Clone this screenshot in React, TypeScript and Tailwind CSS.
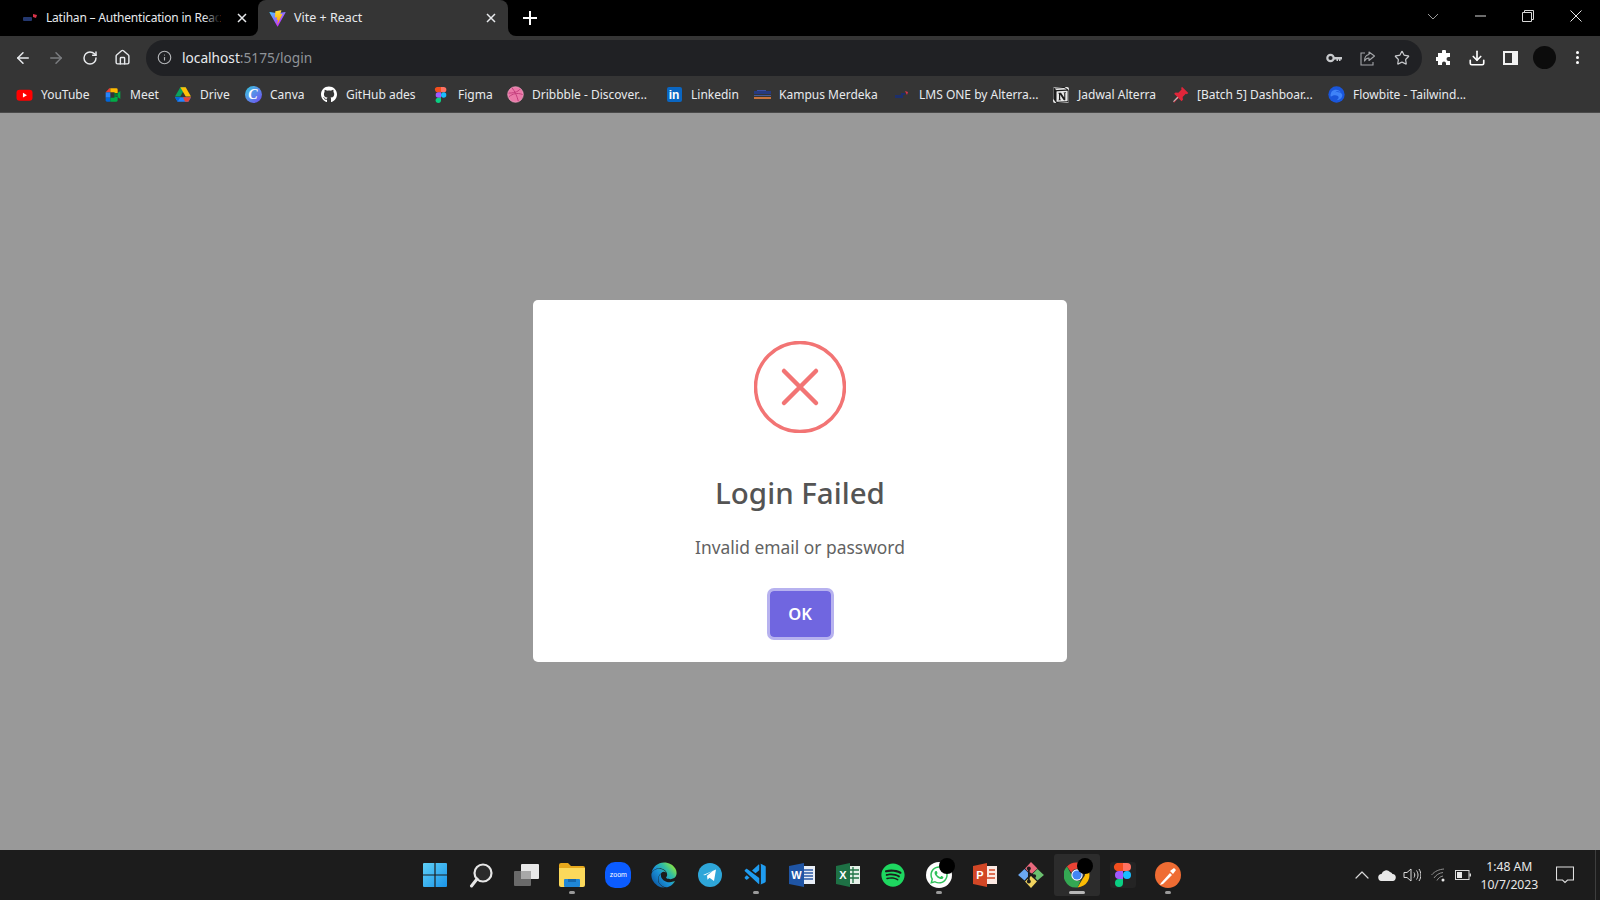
import React from "react";
import { ArrowLeft, ArrowRight, RotateCw, Home, Info, Star, Download, ChevronUp } from "lucide-react";
import { FaGithub, FaSpotify, FaWhatsapp, FaEdge } from "react-icons/fa";
import { SiNotion } from "react-icons/si";
import { VscVscodeInsiders } from "react-icons/vsc";

const FONT = "font-['Noto_Sans','Open_Sans',sans-serif]";

const ViteIcon = () => (
  <svg width="17" height="17" viewBox="0 0 410 404">
    <defs>
      <linearGradient id="va" x1="6" y1="33" x2="235" y2="344" gradientUnits="userSpaceOnUse">
        <stop stopColor="#41D1FF" />
        <stop offset="1" stopColor="#BD34FE" />
      </linearGradient>
      <linearGradient id="vb" x1="194" y1="8" x2="236" y2="292" gradientUnits="userSpaceOnUse">
        <stop stopColor="#FFEA83" />
        <stop offset="0.08" stopColor="#FFDD35" />
        <stop offset="1" stopColor="#FFA800" />
      </linearGradient>
    </defs>
    <path d="M399.6 59.5 215.9 388.2c-3.8 6.8-13.5 6.8-17.4.1L11.2 59.5C7 52.1 13.3 43.2 21.6 44.7l183.9 32.9c1.2.2 2.4.2 3.6 0l180-32.8c8.3-1.5 14.6 7.2 10.5 14.7Z" fill="url(#va)" />
    <path d="M292.9 1.6 156.9 28.2c-2.2.4-3.9 2.3-4 4.6l-8.4 141.2c-.2 3.3 2.9 5.9 6.1 5.2l37.9-8.8c3.5-.8 6.7 2.3 6 5.9l-11.3 55.1c-.8 3.7 2.7 6.9 6.3 5.8l23.4-7.1c3.6-1.1 7.1 2.1 6.3 5.8l-17.9 86.6c-1.1 5.4 6.1 8.4 9.1 3.7l2-3.1 110.9-221.3c1.9-3.7-1.3-7.9-5.4-7.1l-39 7.5c-3.7.7-6.8-2.7-5.8-6.3l25.5-88.2c1-3.7-2.2-7.1-5.9-6.4Z" fill="url(#vb)" />
  </svg>
);

const YouTube = () => (
  <svg width="17" height="16" viewBox="0 0 24 24" className="shrink-0">
    <rect x="0" y="4" width="24" height="16.5" rx="4.5" fill="#f00" />
    <path d="M9.7 8.7v7l6-3.5z" fill="#fff" />
  </svg>
);
const Meet = () => (
  <svg width="16" height="16" viewBox="0 0 24 24">
    <path d="M1 8h7V2H6.5L1 8Z" fill="#ea4335" />
    <path d="M1 8h7v8H1z" fill="#2684fc" />
    <path d="M1 16h7v6H3a2 2 0 0 1-2-2v-4Z" fill="#0066da" />
    <path d="M8 2h9a2 2 0 0 1 2 2v5h-5V8H8V2Z" fill="#ffba00" />
    <path d="M8 16h6v-1h5v5a2 2 0 0 1-2 2H8v-6Z" fill="#00ac47" />
    <path d="M14 8v8l5-3v-2z" fill="#00832d" />
    <path d="m19 9 4-3v12l-4-3z" fill="#00ac47" />
  </svg>
);
const Drive = () => (
  <svg width="16" height="15" viewBox="0 0 24 22">
    <path d="m8 0 8 0-8 14H0z" fill="#0ba25e" />
    <path d="M8 0h8l8 14h-8z" fill="#ffc107" />
    <path d="M0 15h24l-4 7H4z" fill="#2684fc" />
    <path d="M0 15h8l-4 7z" fill="#0066da" />
    <path d="m24 15-4 7h-5l-3-7z" fill="#ea4335" />
  </svg>
);
const Canva = () => (
  <span className="flex h-[17px] w-[17px] shrink-0 items-center justify-center rounded-full bg-gradient-to-br from-[#1fc8db] to-[#6a3df0] font-['Liberation_Serif',serif] text-[14px] font-bold italic leading-none text-white">
    C
  </span>
);
const Figma = ({ s = 16 }: { s?: number }) => (
  <svg width={s} height={s} viewBox="0 0 24 24">
    <path d="M6 0h6v8H8a4 4 0 0 1-2-8Z" fill="#f24e1e" />
    <path d="M12 0h4a4 4 0 0 1 0 8h-4z" fill="#ff7262" />
    <path d="M12 8H8a4 4 0 0 0 0 8h4z" fill="#a259ff" />
    <circle cx="16" cy="12" r="4" fill="#1abcfe" />
    <path d="M12 16H8a4 4 0 1 0 4 4z" fill="#0acf83" />
  </svg>
);
const Dribbble = () => (
  <svg width="17" height="17" viewBox="0 0 24 24" fill="none" className="shrink-0">
    <circle cx="12" cy="12" r="11" fill="#ea79a8" stroke="#f3a6c6" />
    <path d="M7 2.500c4 5 7 11 9 19M2 10c6 0 13-1 17-6M3 15c5-4 11-6 19-3" stroke="#c33f7c" strokeWidth="1.400" />
  </svg>
);
const Linkedin = () => (
  <span className="flex h-[15px] w-[15px] items-center justify-center rounded-[2px] bg-[#0a66c2] font-['Liberation_Sans',sans-serif] text-[12px] font-bold leading-none text-white">
    in
  </span>
);
const Kampus = () => (
  <svg width="17" height="10" viewBox="0 0 17 10" className="shrink-0">
    <rect y="1" width="17" height="3" fill="#273a80" />
    <rect x="3" y="0" width="9" height="1" fill="#3b4ea0" />
    <rect y="5" width="17" height="1" fill="#455a9c" />
    <rect y="7" width="17" height="2" fill="#c9733c" />
  </svg>
);
const Lms = () => (
  <svg width="16" height="10" viewBox="0 0 16 10">
    <rect x="1" y="5" width="8" height="3" fill="#1d2f6b" />
    <rect x="7" y="3" width="4" height="2" fill="#1d2f6b" />
    <path d="m11 1 3 1-1 3z" fill="#d9344a" />
  </svg>
);
const Notion = () => (
  <span className="flex h-4 w-4 items-center justify-center rounded-[2px] bg-[#e8e8e8]">
    <SiNotion size={16} color="#1c1c1c" />
  </span>
);
const Pin = () => (
  <svg width="17" height="17" viewBox="0 0 24 24" className="shrink-0">
    <path d="m14 1 9 9-2 1.500-1.500-.5-4.500 4.500.5 4-2 2-4.500-4.500-6 6.500-1-1 6-6.500L3 11l2-2 4 .5L13.500 5 13 3z" fill="#e0263a" />
    <path d="m7.500 15 1.500 1.500-6.500 6-1-1z" fill="#b9b9b9" />
  </svg>
);
const Flowbite = () => (
  <svg width="17" height="17" viewBox="0 0 24 24" className="shrink-0">
    <circle cx="12" cy="12" r="11.500" fill="#1a56db" />
    <path d="M5 8c4-4 11-3 13 1-3-2-6-2-8 0 4-1 8 0 10 3 1 4-3 8-8 8 3-2 4-4 2-6-3-2-8-1-10 1-1-2 0-5 1-7Z" fill="#3f83f8" />
  </svg>
);

const bookmarks: { icon: React.ReactNode; label: string; w: string }[] = [
  { icon: <YouTube />, label: "YouTube", w: "w-[89px]" },
  { icon: <Meet />, label: "Meet", w: "w-[70px]" },
  { icon: <Drive />, label: "Drive", w: "w-[70px]" },
  { icon: <Canva />, label: "Canva", w: "w-[76px]" },
  { icon: <FaGithub size={17} color="#fff" />, label: "GitHub ades", w: "w-[112px]" },
  { icon: <Figma />, label: "Figma", w: "w-[74px]" },
  { icon: <Dribbble />, label: "Dribbble - Discover...", w: "w-[159px]" },
  { icon: <Linkedin />, label: "Linkedin", w: "w-[88px]" },
  { icon: <Kampus />, label: "Kampus Merdeka", w: "w-[140px]" },
  { icon: <Lms />, label: "LMS ONE by Alterra...", w: "w-[159px]" },
  { icon: <Notion />, label: "Jadwal Alterra", w: "w-[119px]" },
  { icon: <Pin />, label: "[Batch 5] Dashboar...", w: "w-[156px]" },
  { icon: <Flowbite />, label: "Flowbite - Tailwind...", w: "w-[150px]" },
];

const Windows = () => (
  <svg width="26" height="26" viewBox="0 0 26 26">
    <defs>
      <linearGradient id="win" x1="0" y1="0" x2="1" y2="1">
        <stop stopColor="#5fd0f7" />
        <stop offset="1" stopColor="#1a94e8" />
      </linearGradient>
    </defs>
    <path d="M1 2a1 1 0 0 1 1-1h10.400v11.400H1zM13.600 1H24a1 1 0 0 1 1 1v10.400H13.600zM1 13.600h11.400V25H2a1 1 0 0 1-1-1zM13.600 13.600H25V24a1 1 0 0 1-1 1H13.600z" fill="url(#win)" />
  </svg>
);
const Search = () => (
  <svg width="26" height="26" viewBox="0 0 26 26" fill="none">
    <circle cx="15" cy="11" r="8.500" stroke="#e6e6e6" strokeWidth="2.200" fill="#2a2a2a" />
    <path d="M9 17 3.500 24" stroke="#e6e6e6" strokeWidth="3" strokeLinecap="round" />
  </svg>
);
const TaskView = () => (
  <svg width="26" height="24" viewBox="0 0 26 24">
    <rect x="0" y="8" width="17" height="15" rx="1" fill="#6a6a6a" />
    <rect x="7" y="1" width="18" height="15" rx="1" fill="#e8e8e8" />
    <rect x="7" y="8" width="10" height="8" fill="#a8a8a8" />
  </svg>
);
const Folder = () => (
  <svg width="26" height="24" viewBox="0 0 26 24">
    <path d="M0 2a2 2 0 0 1 2-2h7l3 3h12a2 2 0 0 1 2 2v4H0z" fill="#e8a91c" />
    <path d="M0 5h26v17a2 2 0 0 1-2 2H2a2 2 0 0 1-2-2z" fill="#fbd95b" />
    <rect x="5" y="16" width="16" height="8" rx="1" fill="#1f86d6" />
    <rect x="9" y="16" width="8" height="3" fill="#1467ae" />
  </svg>
);
const Zoom = () => (
  <span className="flex h-[26px] w-[26px] items-center justify-center rounded-[10px] bg-[#0b5cff] font-['Liberation_Sans',sans-serif] text-[7px] lowercase text-white">
    zoom
  </span>
);
const Edge = () => (
  <>
    <svg width="0" height="0" className="absolute">
      <defs>
        <linearGradient id="edgeg" x1="0.1" y1="0.9" x2="0.9" y2="0.2">
          <stop offset="0" stopColor="#0c59a4" />
          <stop offset="0.45" stopColor="#1b93d8" />
          <stop offset="0.75" stopColor="#33bfa0" />
          <stop offset="1" stopColor="#7fe04f" />
        </linearGradient>
      </defs>
    </svg>
    <FaEdge size={26} fill="url(#edgeg)" />
  </>
);
const Telegram = () => (
  <svg width="24" height="24" viewBox="0 0 24 24">
    <circle cx="12" cy="12" r="12" fill="#2ea6d9" />
    <path d="M5 12 18 6.500 16 18l-4.500-3.300-2 2-.5-4 6-5-8 4.500z" fill="#fff" />
  </svg>
);
const Word = () => (
  <svg width="26" height="24" viewBox="0 0 26 24">
    <rect x="10" y="3" width="16" height="18" fill="#e8eef7" />
    <path d="M13 7h11M13 10h11M13 13h11M13 16h11" stroke="#2b5aa6" strokeWidth="1.500" />
    <path d="M0 3 15 0v24L0 21z" fill="#1f55a5" />
    <text x="7.500" y="16" fontSize="11" fontWeight="700" fill="#fff" textAnchor="middle" fontFamily="Liberation Sans, sans-serif">W</text>
  </svg>
);
const Excel = () => (
  <svg width="24" height="24" viewBox="0 0 24 24">
    <rect x="10" y="3" width="14" height="18" fill="#e5f0e8" />
    <path d="M12 7h11M12 11h11M12 15h11M17 4v16" stroke="#217346" strokeWidth="1.300" />
    <path d="M0 3 14 0v24L0 21z" fill="#1e7145" />
    <text x="7" y="16" fontSize="11" fontWeight="700" fill="#fff" textAnchor="middle" fontFamily="Liberation Sans, sans-serif">X</text>
  </svg>
);
const Powerpoint = () => (
  <svg width="24" height="24" viewBox="0 0 24 24">
    <rect x="9" y="3" width="15" height="18" fill="#fbe9e3" />
    <path d="M16 7h6M16 11h6M13 15h9" stroke="#d24726" strokeWidth="1.500" />
    <path d="M0 3 14 0v24L0 21z" fill="#d24726" />
    <text x="7" y="16" fontSize="11" fontWeight="700" fill="#fff" textAnchor="middle" fontFamily="Liberation Sans, sans-serif">P</text>
  </svg>
);
const Fork = () => (
  <svg width="28" height="28" viewBox="0 0 26 26">
    <path d="m13 1 6 6-6 5.500L7.500 7z" fill="#e8697d" />
    <path d="m7 7.500 5 5L7 18 1 13z" fill="#6ba8f2" />
    <path d="m19 7.500 6 5.500-6 5-5-5.500z" fill="#6cc070" />
    <path d="m13 14 5.500 5L13 25l-5.500-6z" fill="#f1d35f" />
    <path d="M11 7v12M11 11l5 3" stroke="#1c1c1c" strokeWidth="1.600" />
    <circle cx="11" cy="7" r="1.800" fill="#1c1c1c" />
    <circle cx="16" cy="14" r="1.800" fill="#1c1c1c" />
    <circle cx="11" cy="19" r="1.800" fill="#1c1c1c" />
  </svg>
);
const Chrome = () => (
  <svg width="26" height="26" viewBox="0 0 48 48">
    <path d="M24 1a23 23 0 0 1 20 11.500H24a11.500 11.500 0 0 0-10.500 7L5.500 8.500A23 23 0 0 1 24 1Z" fill="#ea4335" />
    <path d="M44 12.500A23 23 0 0 1 25 47l10-17a11.500 11.500 0 0 0 0-17.500z" fill="#fbbc04" />
    <path d="M5.500 8.500 14 24a11.500 11.500 0 0 0 17 9.500L25 47A23 23 0 0 1 5.500 8.500Z" fill="#34a853" />
    <circle cx="24" cy="24" r="10.500" fill="#fff" />
    <circle cx="24" cy="24" r="8.500" fill="#4285f4" />
  </svg>
);
const Postman = () => (
  <svg width="26" height="26" viewBox="0 0 26 26">
    <circle cx="13" cy="13" r="13" fill="#ef6c33" />
    <path d="m6 21 9-10 2 2-9 9-3 1z" fill="#fff" />
    <path d="m15 9 4-3 2 2-3 4z" fill="#fff" />
  </svg>
);

const Dot = ({ wide }: { wide?: boolean }) => (
  <span className={`absolute bottom-[2px] left-1/2 h-[3px] -translate-x-1/2 rounded-full ${wide ? "w-4 bg-[#b8b8b8]" : "w-[6px] bg-[#9a9a9a]"}`} />
);
const Badge = () => <span className="absolute left-[23px] top-[4px] h-4 w-4 rounded-full bg-black" />;

const taskbarItems: { icon: React.ReactNode; dot?: boolean; badge?: boolean; active?: boolean }[] = [
  { icon: <Windows /> },
  { icon: <Search /> },
  { icon: <TaskView /> },
  { icon: <Folder />, dot: true },
  { icon: <Zoom /> },
  { icon: <Edge /> },
  { icon: <Telegram /> },
  { icon: <VscVscodeInsiders size={26} color="#1f9cf0" />, dot: true },
  { icon: <Word /> },
  { icon: <Excel /> },
  { icon: <FaSpotify size={24} color="#1ed760" /> },
  {
    icon: (
      <span className="flex h-[26px] w-[26px] items-center justify-center rounded-full bg-white">
        <FaWhatsapp size={20} color="#2fc15a" />
      </span>
    ),
    dot: true,
    badge: true,
  },
  { icon: <Powerpoint /> },
  { icon: <Fork /> },
  { icon: <Chrome />, active: true, badge: true },
  {
    icon: (
      <span className="flex h-[26px] w-[26px] items-center justify-center rounded-[3px] bg-[#242424]">
        <Figma s={24} />
      </span>
    ),
  },
  { icon: <Postman />, dot: true },
];

export default function App() {
  return (
    <div className={`flex h-[900px] w-[1600px] flex-col overflow-hidden bg-[#999999] ${FONT}`}>
      {/* Tab strip */}
      <div className="flex h-9 shrink-0 items-stretch bg-black pl-[6px] text-[12.5px] text-[#e8eaed]">
        <div className="flex w-[252px] items-center pl-4 pr-[11px]">
          <svg width="16" height="10" viewBox="0 0 16 10" className="shrink-0">
            <rect x="1" y="4" width="9" height="4" rx="1" fill="#24386f" />
            <path d="m11 1 4 1-1 3-3-1z" fill="#d9344a" />
          </svg>
          <span className="relative ml-2 whitespace-nowrap text-[12px] tracking-[-0.2px]">
            Latihan – Authentication in Reac
            <span className="absolute inset-y-0 right-0 w-4 bg-gradient-to-r from-transparent to-black" />
          </span>
          <svg width="10" height="10" viewBox="0 0 10 10" className="ml-auto shrink-0" stroke="#e8eaed" strokeWidth="1.500">
            <path d="m1 1 8 8M9 1 1 9" />
          </svg>
        </div>
        <div className="relative flex w-[250px] items-center rounded-t-lg bg-[#353535] pl-[11px] pr-[12px]">
          <span className="absolute -left-2 bottom-0 h-2 w-2 bg-[#353535]">
            <span className="block h-2 w-2 rounded-br-lg bg-black" />
          </span>
          <span className="absolute -right-2 bottom-0 h-2 w-2 bg-[#353535]">
            <span className="block h-2 w-2 rounded-bl-lg bg-black" />
          </span>
          <ViteIcon />
          <span className="ml-2">Vite + React</span>
          <svg width="10" height="10" viewBox="0 0 10 10" className="ml-auto" stroke="#e8eaed" strokeWidth="1.500">
            <path d="m1 1 8 8M9 1 1 9" />
          </svg>
        </div>
        <div className="ml-[15px] flex items-center">
          <svg width="14" height="14" viewBox="0 0 14 14" stroke="#fff" strokeWidth="2">
            <path d="M7 0v14M0 7h14" />
          </svg>
        </div>
        <div className="ml-auto flex items-center pb-[4px] text-[#c8c8c8]">
          <svg width="12" height="7" viewBox="0 0 12 7" fill="none" stroke="#9a9a9a" className="mr-[36px]">
            <path d="m1 1 5 5 5-5" />
          </svg>
          <svg width="11" height="2" viewBox="0 0 11 2" stroke="#d8d8d8" className="mr-[36px]">
            <path d="M0 1h11" />
          </svg>
          <svg width="12" height="12" viewBox="0 0 12 12" fill="none" stroke="#d8d8d8" className="mr-[36px]">
            <path d="M.5 2.500h9v9h-9zM2.500 2.500v-2h9v9h-2" />
          </svg>
          <svg width="12" height="12" viewBox="0 0 12 12" stroke="#e8e8e8" className="mr-[18px]">
            <path d="m.5.500 11 11M11.500.500l-11 11" />
          </svg>
        </div>
      </div>

      {/* Toolbar */}
      <div className="flex h-[43px] shrink-0 items-center bg-[#353535] pl-[6px]">
        <div className="flex w-[33px] justify-center"><ArrowLeft size={18} color="#e8eaed" strokeWidth={2} /></div>
        <div className="flex w-[34px] justify-center"><ArrowRight size={18} color="#7b7d80" strokeWidth={2} /></div>
        <div className="flex w-[33px] justify-center"><RotateCw size={16} color="#e8eaed" strokeWidth={2.200} /></div>
        <div className="flex w-[33px] justify-center"><Home size={17} color="#e8eaed" strokeWidth={2} /></div>
        <div className="ml-[7px] flex h-9 w-[1276px] items-center rounded-full bg-[#202124] pl-[11px] pr-[3px]">
          <Info size={15} color="#b4b6b9" strokeWidth={1.800} />
          <span className="ml-[10px] pt-[1px] text-[13.700px] text-[#e8eaed]">
            localhost<span className="text-[#8f9398]">:5175/login</span>
          </span>
          <div className="ml-auto flex items-center">
            <div className="flex w-[34px] justify-center">
              <svg width="16" height="10" viewBox="0 0 16 10" fill="none">
                <circle cx="4.500" cy="5" r="3.200" stroke="#c8cacd" strokeWidth="2.200" />
                <path d="M8 4h8v2.500h-1.500V8H13V6.500h-1V8h-1.500V6.500H8z" fill="#c8cacd" />
              </svg>
            </div>
            <div className="flex w-[34px] justify-center">
              <svg width="16" height="16" viewBox="0 0 16 16" fill="none" stroke="#a4a6a9" strokeWidth="1.100">
                <path d="M5 3H1v12h12v-3" />
                <path d="M9 2v2.500C6 5 4.500 7 4.500 11c1-2 2.500-3 4.500-3v2.500L14.500 6z" strokeLinejoin="round" />
              </svg>
            </div>
            <div className="flex w-[34px] justify-center"><Star size={16} color="#c8cacd" strokeWidth={1.800} /></div>
          </div>
        </div>
        <div className="ml-[5px] flex w-[33px] justify-center pl-[1px]">
          <svg width="16" height="16" viewBox="0 0 16 16" fill="#fff">
            <path d="M6 1.500a2 2 0 0 1 4 0V3h4v4h-1.500a2 2 0 0 0 0 4H14v4h-4v-1.500a2 2 0 0 0-4 0V15H2v-4H.500a2 2 0 0 1 0-4H2V3h4z" />
          </svg>
        </div>
        <div className="flex w-[34px] justify-center"><Download size={18} color="#fff" strokeWidth={2.200} /></div>
        <div className="flex w-[33px] justify-center">
          <span className="flex h-[14px] w-[15px] bg-[#f2f2f2] p-[2px]">
            <span className="h-full w-[7px] bg-[#353535]" />
          </span>
        </div>
        <div className="flex w-[34px] justify-center">
          <span className="h-[23px] w-[23px] rounded-full bg-[#0c0c0c]" />
        </div>
        <div className="flex w-[33px] flex-col items-center gap-[2px]">
          <span className="h-[3px] w-[3px] rounded-full bg-white" />
          <span className="h-[3px] w-[3px] rounded-full bg-white" />
          <span className="h-[3px] w-[3px] rounded-full bg-white" />
        </div>
      </div>

      {/* Bookmarks */}
      <div className="flex h-[34px] shrink-0 items-center border-b border-[#4a4a4a] bg-[#353535] pb-[2px] pl-[16px] text-[12px] text-[#e8eaed]">
        {bookmarks.map((b) => (
          <div key={b.label} className={`flex shrink-0 items-center ${b.w}`}>
            <span className="flex w-4 shrink-0 items-center justify-center">{b.icon}</span>
            <span className="ml-[9px] whitespace-nowrap">{b.label}</span>
          </div>
        ))}
      </div>

      {/* Page */}
      <main className="flex flex-1 items-center justify-center pb-[2px]">
        <div className="flex h-[362px] w-[534px] flex-col items-center rounded-[5px] bg-white pt-[41px]">
          <svg width="92" height="92" viewBox="0 0 92 92" fill="none" stroke="#f27474">
            <circle cx="46" cy="46" r="44.500" strokeWidth="3.500" />
            <path d="M30 30 62 62M62 30 30 62" strokeWidth="4.500" strokeLinecap="round" />
          </svg>
          <h1 className="mt-[39px] text-[29.500px] font-medium leading-[42px] text-[#545454]">Login Failed</h1>
          <p className="mt-[20px] text-[17.400px] leading-[26px] text-[#626262]">Invalid email or password</p>
          <button className="mt-[31px] h-[46px] w-[61px] rounded-[4px] bg-[#7066e0] pt-[2px] text-[16.500px] font-semibold text-white outline-[3px] outline-[#7066e080]">
            OK
          </button>
        </div>
      </main>

      {/* Taskbar */}
      <footer className="flex h-[50px] shrink-0 items-center bg-[#1c1c1c] pl-[412px] text-[12.200px] text-[#e8e8e8]">
        {taskbarItems.map((t, i) => (
          <div
            key={i}
            className={`relative flex h-[42px] w-[45.850px] shrink-0 items-center justify-center rounded-[3px] ${t.active ? "bg-[#2c2c2c]" : ""}`}
          >
            {t.icon}
            {t.badge && <Badge />}
            {(t.dot || t.active) && <Dot wide={t.active} />}
          </div>
        ))}
        <div className="ml-[161px] flex w-[20px] justify-center"><ChevronUp size={24} color="#d8d8d8" strokeWidth={1.200} className="shrink-0" /></div>
        <div className="ml-[5px] flex w-[20px] justify-center">
          <svg width="18" height="12" viewBox="0 0 18 12">
            <path d="M4 12a3.500 3.500 0 0 1-.5-7A5 5 0 0 1 12 3a3.500 3.500 0 0 1 2.500 2A3.500 3.500 0 0 1 14 12z" fill="#e8e8e8" />
          </svg>
        </div>
        <div className="ml-[5px] flex w-[20px] justify-center">
          <svg width="18" height="14" viewBox="0 0 18 14" fill="none" stroke="#d8d8d8">
            <path d="M1 4.500h3L8 1v12L4 9.500H1zM11 4.500c1 1.500 1 3.500 0 5M13.500 2.500c2 3 2 6 0 9M16 1c2.500 4 2.500 8 0 12" />
          </svg>
        </div>
        <div className="ml-[6px] flex w-[20px] justify-center">
          <svg width="15" height="15" viewBox="0 0 15 15" fill="none" stroke="#8f8f8f">
            <path d="M.5 7C4 3 8 1.500 13 1M3 10c2-3 5-5 9-5.500M6 12.500c1-2 3-4 6-4.500" />
            <circle cx="12" cy="12" r="1.500" fill="#e8e8e8" stroke="none" />
          </svg>
        </div>
        <div className="ml-[5px] flex w-[20px] justify-center">
          <svg width="16" height="10" viewBox="0 0 16 10" fill="none">
            <rect x=".5" y=".5" width="13.500" height="9" stroke="#d8d8d8" />
            <rect x="2" y="2" width="5" height="6" fill="#e8e8e8" />
            <rect x="14.500" y="3.500" width="1.500" height="3" fill="#d8d8d8" />
          </svg>
        </div>
        <div className="ml-[3px] flex w-[66px] flex-col items-center pt-[1px] leading-[18px]">
          <span>1:48 AM</span>
          <span>10/7/2023</span>
        </div>
        <div className="ml-[14px]">
          <svg width="18" height="18" viewBox="0 0 18 18" fill="none" stroke="#e0e0e0" strokeWidth="1.100">
            <path d="M.5 1h17v13h-6l-2.500 2.500L6.500 14h-6z" />
          </svg>
        </div>
        <span className="ml-auto mr-[4px] h-full w-px bg-[#3e3e3e]" />
      </footer>
    </div>
  );
}
